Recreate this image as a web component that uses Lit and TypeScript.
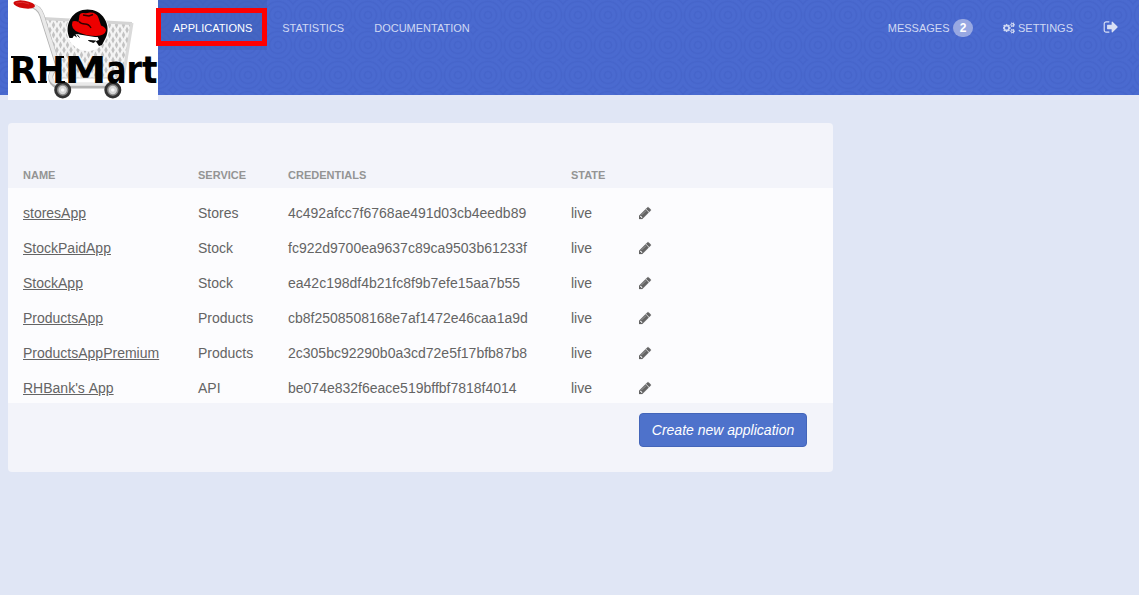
import { LitElement, html, css, svg } from "lit";
import { customElement } from "lit/decorators.js";

const PENCIL =
  "M491 1536l91-91-235-235-91 91v107h128v128h107zm523-928q0-22-22-22-10 0-17 7l-542 542q-7 7-7 17 0 22 22 22 10 0 17-7l542-542q7-7 7-17zm-54-192l416 416-832 832h-416v-416zm683 96q0 53-37 90l-166 166-416-416 166-165q36-38 90-38 53 0 91 38l235 234q37 39 37 91z";
const SIGN_OUT =
  "M704 1440q0 4 1 20t.5 26.5-3 23.5-10 19.5-20.5 6.5h-320q-119 0-203.5-84.5t-84.5-203.5v-704q0-119 84.5-203.5t203.5-84.5h320q13 0 22.5 9.5t9.5 22.5q0 4 1 20t.5 26.5-3 23.5-10 19.5-20.5 6.5h-320q-66 0-113 47t-47 113v704q0 66 47 113t113 47h312l11.5 1 11.5 3 8 5.5 7 9 2 13.5zm928-544q0 26-19 45l-544 544q-19 19-45 19t-45-19-19-45v-288h-448q-26 0-45-19t-19-45v-384q0-26 19-45t45-19h448v-288q0-26 19-45t45-19 45 19l544 544q19 19 19 45z";
const SMALL_COG =
  "v140q0 16-149 31-12 27-30 52 51 113 51 138 0 4-4 7-122 71-124 71-8 0-46-47t-52-68q-20 2-30 2t-30-2q-14 21-52 68t-46 47q-2 0-124-71-4-3-4-7 0-25 51-138-18-25-30-52-149-15-149-31v-140q0-16 149-31 13-29 30-52-51-113-51-138 0-4 4-7 4-2 35-20t59-34 30-16q8 0 46 46.5t52 67.5q20-2 30-2t30 2q51-71 92-112l6-2q4 0 124 70 4 3 4 7 0 25-51 138 17 23 30 52 149 15 149 31z";
const COGS =
  "M832 896q0-106-75-181t-181-75-181 75-75 181 75 181 181 75 181-75 75-181zm768 512q0-52-38-90t-90-38-90 38-38 90q0 53 37.5 90.5t90.5 37.5 90.5-37.5 37.5-90.5zm0-1024q0-52-38-90t-90-38-90 38-38 90q0 53 37.5 90.5t90.5 37.5 90.5-37.5 37.5-90.5zm-384 421v185q0 10-7 19.5t-16 10.5l-155 24q-11 35-32 76 34 48 90 115 7 11 7 20 0 12-7 19-23 30-82.5 89.5t-78.5 59.5q-11 0-21-7l-115-90q-37 19-77 31-11 108-23 155-7 24-30 24h-186q-11 0-20-7.5t-10-17.5l-23-153q-34-10-75-31l-118 89q-7 7-20 7-11 0-21-8-144-133-144-160 0-9 7-19 10-14 41-53t47-61q-23-44-35-82l-152-24q-10-1-17-9.5t-7-19.5v-185q0-10 7-19.5t16-10.5l155-24q11-35 32-76-34-48-90-115-7-11-7-20 0-12 7-20 22-30 82-89t79-59q11 0 21 7l115 90q34-18 77-32 11-108 23-154 7-24 30-24h186q11 0 20 7.5t10 17.5l23 153q34 10 75 31l118-89q8-7 20-7 11 0 21 8 144 133 144 160 0 8-7 19-12 16-42 54t-45 60q23 48 34 82l152 23q10 2 17 10.5t7 19.5z";
const SMALL_COGS = "M1920 1338" + SMALL_COG + "M1920 314" + SMALL_COG;

const wheel = (cx: number) => svg`
  <circle cx=${cx} cy="90" r="8.5" fill="#333"/>
  <circle cx=${cx} cy="90" r="5.7" fill="#8b8b8b"/>
  <circle cx=${cx} cy="90" r="4.2" fill="#d6d6d6"/>
  <circle cx=${cx} cy="90" r="1.8" fill="#f8f8f8"/>`;

// Each letter of the wordmark: glyph, left edge, advance width.
const WORD: [string, number, number][] = [
  ["R", 2, 27], ["H", 29, 27.5], ["M", 56.5, 42], ["a", 98.5, 20], ["r", 118.5, 15.5], ["t", 134, 15.5],
];

@customElement("rh-logo")
class RhLogo extends LitElement {
  static styles = css`
    :host { display: block; width: 150px; height: 100px; background: #fff; }
    svg { display: block; }
    .word { font: bold 37px "DejaVu Sans", sans-serif; fill: #000; }
  `;
  render() {
    return html`<svg width="150" height="100" viewBox="0 0 150 100">
      <defs>
        <pattern id="mesh" width="7" height="10" patternUnits="userSpaceOnUse">
          <rect width="7" height="10" fill="#f4f4f4"/>
          <path d="M3.5 1.4L5.2 5 3.5 8.6 1.8 5z" fill="#c2c2c2"/>
          <path d="M0-3.6L1.7 0 0 3.6-1.7 0zM7-3.6L8.7 0 7 3.6 5.3 0zM0 6.4L1.7 10 0 13.6-1.7 10zM7 6.4L8.7 10 7 13.6 5.3 10z" fill="#c2c2c2"/>
        </pattern>
      </defs>
      <path d="M37 19L123 24 115 78H51z" fill="url(#mesh)" stroke="#d0d0d0"/>
      <path d="M35 18.5L124 23.5" stroke="#d4d4d4" stroke-width="3" fill="none"/>
      <path d="M124 23L115 79" stroke="#dadada" stroke-width="3" fill="none"/>
      <path d="M22 5.5q9 1 12 10L50 66Q41 73 43 80q2 6 9 6H108" fill="none" stroke="#b4b4b4" stroke-width="5"/>
      <path d="M22 5q9 1 12 10L50 65.5Q41 73 43 79q2 5 9 5H108" fill="none" stroke="#e9e9e9" stroke-width="3.6"/>
      <ellipse cx="16.2" cy="4.5" rx="10.9" ry="3.8" transform="rotate(9 16.2 4.5)" fill="#cf0808"/>
      <path d="M8 3q7-2 13 1" fill="none" stroke="#e03a3a" stroke-width="0.8"/>
      <circle cx="79.5" cy="30" r="21" fill="#fff"/>
      <path d="M61.5 38A20 20 0 1 1 97.6 38L94 45L91 46L88 41.5L90 37L84 38L70 34.5L67.5 34L69 37.5L66 35.5L64.5 38z" fill="#050505"/>
      <path d="M68 34L90 37.5 91 40 84 42.5 73 41z" fill="#fff"/>
      <path d="M80.5 40.5l7 .5-2 1.5zM69 34.5l2.5 3" stroke="#111" stroke-width="1" fill="#111"/>
      <path d="M64.5 21.5q2.5-1 6 .5L71.5 15q1-2.500 4-2 3 .5 6-.5 7-.5 9 5.500l2.500 7.500q5 2 5 5-1 5-10 5.500-9 0-17-3.500-9-3.500-6.500-11z" fill="#ed0000"/>
      <path d="M75 15l6 1 4-1.500M71 21.500q2 2.500 6 2.500t6 4" stroke="#310000" stroke-width="1.400" fill="none"/>
      ${wheel(54.7)}${wheel(104.8)}
      <g class="word">
        ${WORD.map(([ch, x, w]) => svg`<text x=${x} y="83" textLength=${w} lengthAdjust="spacingAndGlyphs">${ch}</text>`)}
      </g>
      <path d="M3 57h6M3 82h10M30 57h8M30 82h9M48 57h8M48 82h9" stroke="#000" stroke-width="2"/>
    </svg>`;
  }
}

const apps = [
  ["storesApp", "Stores", "4c492afcc7f6768ae491d03cb4eedb89"],
  ["StockPaidApp", "Stock", "fc922d9700ea9637c89ca9503b61233f"],
  ["StockApp", "Stock", "ea42c198df4b21fc8f9b7efe15aa7b55"],
  ["ProductsApp", "Products", "cb8f2508508168e7af1472e46caa1a9d"],
  ["ProductsAppPremium", "Products", "2c305bc92290b0a3cd72e5f17bfb87b8"],
  ["RHBank's App", "API", "be074e832f6eace519bffbf7818f4014"],
];

@customElement("app-root")
class AppRoot extends LitElement {
  static styles = css`
    :host {
      display: block; height: 595px; overflow: hidden; background: #e0e6f5;
      font: 14px/20px "Liberation Sans", Arial, sans-serif; color: #646464;
    }
    * { box-sizing: border-box; }
    .header {
      height: 95px; display: flex; align-items: flex-start; padding: 0 6px 0 8px;
      background-color: #4867cd; background-position: -7px 0; background-size: 30px 30px;
      background-image: repeating-radial-gradient(circle at 15px 15px,
        rgba(78, 112, 214, 0.35) 0, rgba(78, 112, 214, 0.35) 2px,
        rgba(61, 92, 190, 0.2) 3.5px, rgba(78, 112, 214, 0.35) 5px);
    }
    .shade { height: 5px; background: #e3e7f6; }
    .nav { display: flex; flex: 1; position: relative; }
    .item {
      height: 50px; padding: 18px 15px 0; font-size: 11px; line-height: 20px;
      color: #d0d9f3; text-decoration: none; text-transform: uppercase;
      display: flex; white-space: nowrap;
    }
    .active { background: rgba(60, 95, 175, 0.4); color: #fff; }
    .push { margin-left: auto; }
    .mark {
      position: absolute; left: -2px; top: 8px; width: 111px; height: 38px;
      border: 5px solid #fe0000;
    }
    .badge {
      width: 20px; height: 18px; margin: 1px 0 0 3.5px; border-radius: 9px; background: #98a8e2;
      color: #fff; font-size: 12px; line-height: 18px; font-weight: bold; text-align: center;
    }
    .icon { display: block; fill: currentColor; }
    .cogs { margin: 4px 3px 0 0; stroke: currentColor; stroke-width: 15px; }
    .out { margin-top: 1px; color: #d8dff5; }
    .panel {
      width: 825px; height: 349px; margin: 23px 0 0 8px; border-radius: 4px;
      background: #f3f4fa; overflow: hidden;
    }
    .row { display: grid; grid-template-columns: 175px 90px 283px 68px 1fr; padding: 15px 15px 0; }
    .head { height: 65px; padding-top: 42px; font-size: 11px; font-weight: bold; color: #949494; }
    .body { background: #fcfcfe; padding-bottom: 5px; }
    .link { color: inherit; word-spacing: 0.77px; }
    .edit { margin-top: 3px; stroke: currentColor; stroke-width: 30px; }
    .foot { display: flex; justify-content: flex-end; padding: 10px 26px 0 0; }
    .create {
      width: 168px; height: 34px; border: 1px solid #4365b9; border-radius: 4px;
      background: #4e72cb; color: #fff; font: italic 14px/20px "Liberation Sans", Arial, sans-serif;
      padding: 0; white-space: nowrap;
    }
  `;
  render() {
    return html`
      <header class="header">
        <rh-logo></rh-logo>
        <nav class="nav">
          <a class="item active">Applications</a>
          <a class="item">Statistics</a>
          <a class="item">Documentation</a>
          <a class="item push">Messages <span class="badge">2</span></a>
          <a class="item"><svg class="icon cogs" width="12" height="12" viewBox="0 0 1920 1792"><path d=${COGS}/><path d=${SMALL_COGS}/><circle cx="1472" cy="384" r="120" fill="#4867cd" stroke="none"/><circle cx="1472" cy="1408" r="120" fill="#4867cd" stroke="none"/></svg>Settings</a>
          <a class="item"><svg class="icon out" width="15" height="16" viewBox="0 0 1664 1792"><path d=${SIGN_OUT}/></svg></a>
          <div class="mark"></div>
        </nav>
      </header>
      <div class="shade"></div>
      <main class="panel">
        <div class="row head"><span>NAME</span><span>SERVICE</span><span>CREDENTIALS</span><span>STATE</span></div>
        <div class="body">
          ${apps.map(([name, service, key]) => html`<div class="row">
            <span><a class="link" href="#">${name}</a></span><span>${service}</span><span>${key}</span><span>live</span>
            <svg class="icon edit" width="14" height="14" viewBox="128 0 1792 1792"><path d=${PENCIL}/></svg>
          </div>`)}
        </div>
        <div class="foot"><button class="create">Create new application</button></div>
      </main>`;
  }
}
